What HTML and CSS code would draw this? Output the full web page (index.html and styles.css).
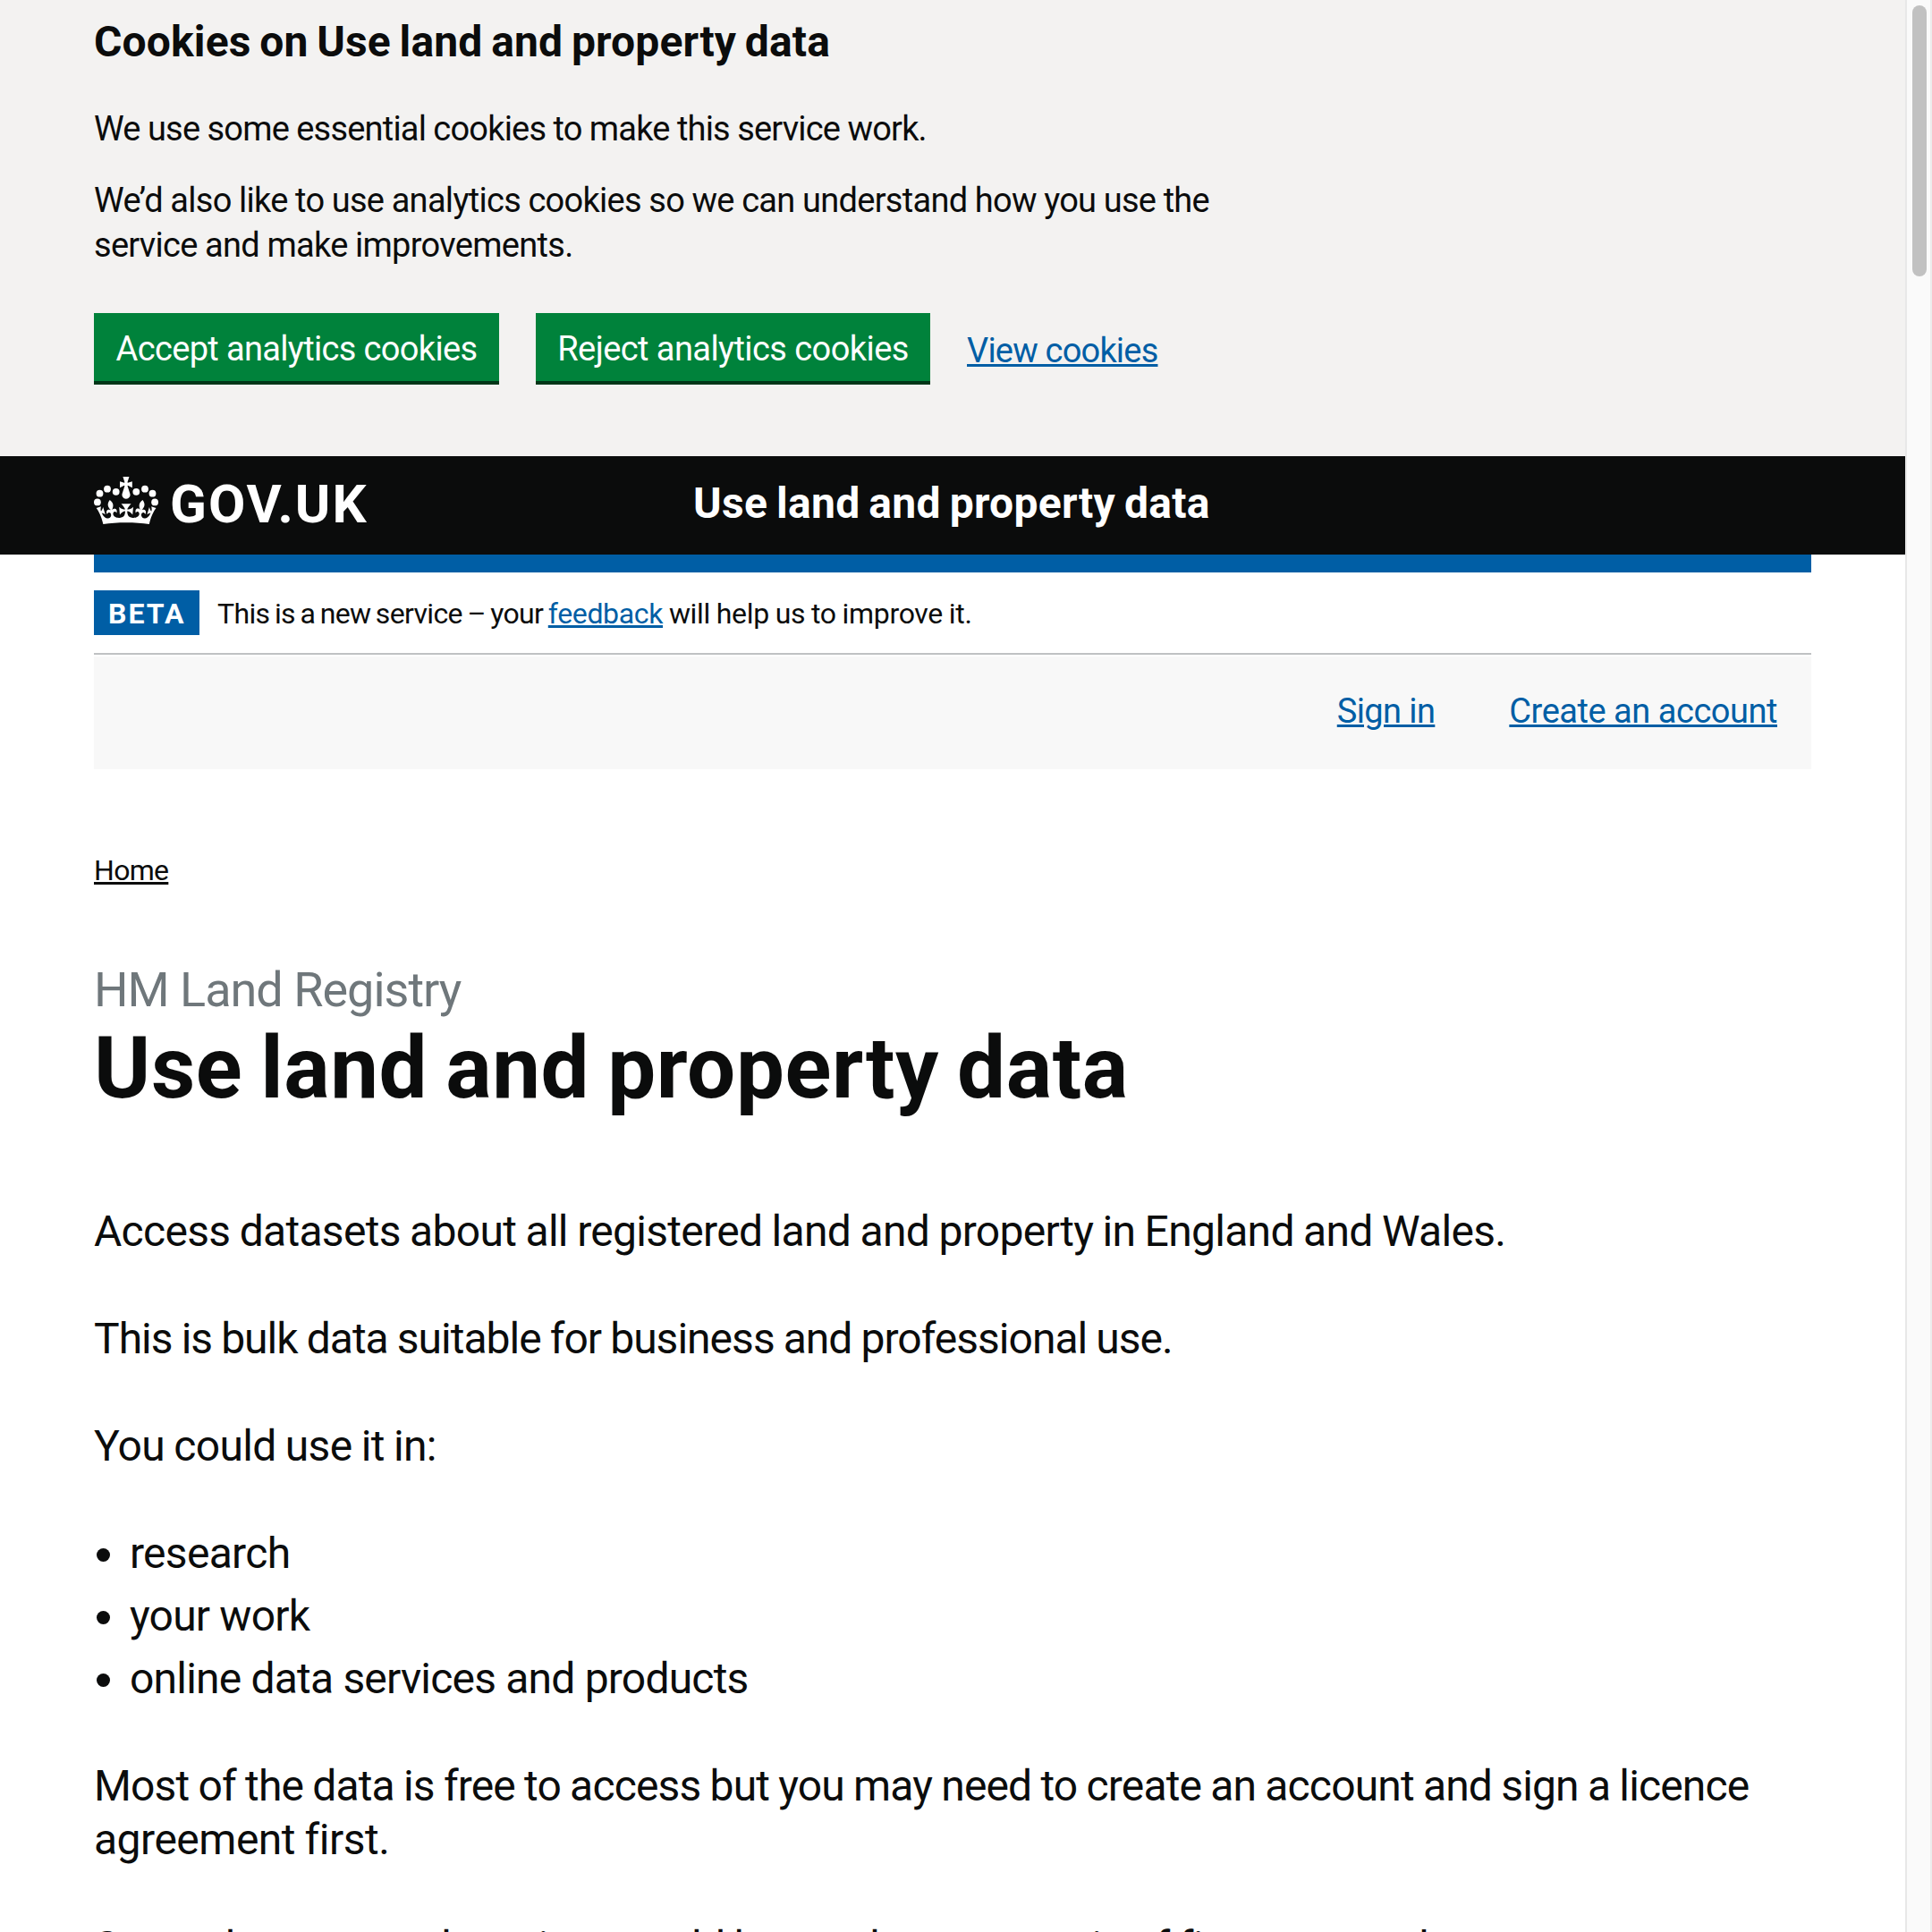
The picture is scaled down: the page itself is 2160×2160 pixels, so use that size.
FILE: index.html
```
<!DOCTYPE html>
<html lang="en">
<head>
<meta charset="utf-8">
<title>Use land and property data - GOV.UK</title>
<link rel="stylesheet" href="styles.css">
</head>
<body>
<div class="viewport">
  <div class="page">
    <section class="cookie-banner">
      <h2 class="cookie-title">Cookies on Use land and property data</h2>
      <p class="cookie-text t-essential">We use some essential cookies to make this service work.</p>
      <p class="cookie-text">We’d also like to use analytics cookies so we can understand how you use the<br>service and make improvements.</p>
      <div class="button-group">
        <button class="button accept">Accept analytics cookies</button>
        <button class="button reject">Reject analytics cookies</button>
        <a class="link view-cookies" href="#">View cookies</a>
      </div>
    </section>

    <header class="header">
      <a class="logo" href="#">
        <svg class="crown" width="72" height="54" viewBox="0 0 72 54" fill="#fff" aria-hidden="true">
          <circle cx="15" cy="13.7" r="3.9"/><circle cx="6.5" cy="18.7" r="3.9"/><circle cx="3.9" cy="28.4" r="3.9"/><circle cx="24.7" cy="16.8" r="3.9"/>
          <circle cx="57" cy="13.7" r="3.9"/><circle cx="65.5" cy="18.7" r="3.9"/><circle cx="68.1" cy="28.4" r="3.9"/><circle cx="47.3" cy="16.8" r="3.9"/>
          <path transform="translate(2.7 0) scale(1.05 1.05)" d="M33.1,9.8c.2-.1.3-.3.5-.5l4.6,2.4v-6.8l-4.6,1.5c-.1-.2-.3-.3-.5-.5l1.9-5.9h-6.7l1.9,5.9c-.2.1-.3.3-.5.5l-4.6-1.5v6.8l4.6-2.4c.1.2.3.3.5.5l-2.6,8c-.9,2.8,1.2,5.7,4.1,5.7h0c3,0,5.1-2.9,4.1-5.7l-2.6-8Z"/>
          <path transform="translate(2.7 -8.6) scale(1.05 1.027)" d="M37,37.9s-3.4,3.8-4.1,6.1c2.2,0,4.2-.5,6.4-2.8l-.7,8.5c-2-2.8-4.4-4.1-5.7-3.8.1,3.1.5,6.7,5.8,7.2,3.7.3,6.7-1.5,7-3.8.4-2.6-2-4.3-3.7-1.6-1.4-4.5,2.4-6.1,4.9-3.2-1.9-4.5-1.8-7.7,2.4-10.9,3,4,2.6,7.3-1.2,11.1,2.4-1.3,6.2,0,4,4.6-1.2-2.8-3.7-2.2-4.2.2-.3,1.7.7,3.7,3,4.2,1.9.3,4.7-.9,7-5.9-1.3,0-2.4.7-3.9,1.7l2.4-8c.6,2.3,1.4,3.7,2.2,4.5.6-1.6.5-2.8,0-5.3l5,1.8c-2.6,3.6-5.2,8.7-7.3,17.5-7.4-1.1-15.7-1.7-24.5-1.7h0c-8.8,0-17.1.6-24.5,1.7-2.1-8.9-4.7-13.9-7.3-17.5l5-1.8c-.5,2.5-.6,3.7,0,5.3.8-.8,1.6-2.3,2.2-4.5l2.4,8c-1.5-1-2.6-1.7-3.9-1.7,2.3,5,5.2,6.2,7,5.9,2.3-.4,3.3-2.4,3-4.2-.5-2.4-3-3.1-4.2-.2-2.2-4.6,1.6-6,4-4.6-3.7-3.7-4.2-7.1-1.2-11.1,4.2,3.2,4.3,6.4,2.4,10.9,2.5-2.8,6.3-1.3,4.9,3.2-1.8-2.7-4.1-1-3.7,1.6.3,2.3,3.3,4.1,7,3.8,5.4-.5,5.7-4.2,5.8-7.2-1.3-.2-3.7,1-5.7,3.8l-.7-8.5c2.2,2.3,4.2,2.7,6.4,2.8-.7-2.3-4.1-6.1-4.1-6.1h10.6Z"/>
        </svg>
        <span class="wordmark">GOV.UK</span>
      </a>
      <span class="service-name">Use land and property data</span>
    </header>

    <div class="container">
      <div class="blue-bar"></div>
      <div class="phase-banner">
        <strong class="tag">BETA</strong>
        <span class="phase-text"><span class="phase-intro">This is a new service – your </span><a class="link feedback" href="#">feedback</a><span class="phase-end"> will help us to improve it.</span></span>
      </div>
      <nav class="account-nav">
        <a class="link sign-in" href="#">Sign in</a>
        <a class="link create" href="#">Create an account</a>
      </nav>
      <div class="breadcrumbs"><a class="crumb" href="#">Home</a></div>
      <main class="content">
        <span class="caption">HM Land Registry</span>
        <h1 class="title">Use land and property data</h1>
        <p class="lead">Access datasets about all registered land and property in England and Wales.</p>
        <p class="lead t-bulk">This is bulk data suitable for business and professional use.</p>
        <p class="lead t-you">You could use it in:</p>
        <ul class="uses">
          <li class="use t-research">research</li>
          <li class="use">your work</li>
          <li class="use">online data services and products</li>
        </ul>
        <p class="lead"><span class="t-most">Most of the data is free to access but you may need to create an account and sign a licence</span><br><span class="t-agree">agreement first.</span></p>
        <p class="lead">Some datasets and services could be used across a mix of firms to see those</p>
      </main>
    </div>
  </div>
  <div class="scrollbar"><div class="thumb"></div></div>
</div>
</body>
</html>
```
FILE: styles.css
```
* { box-sizing: border-box; }

body {
  margin: 0;
  background: #fff;
  color: #0b0c0c;
  font-family: Roboto, "Noto Sans", sans-serif;
}

h1, h2, p, ul { margin: 0; padding: 0; }

.viewport {
  display: flex;
  width: 2160px;
  height: 2160px;
  overflow: hidden;
}

.page {
  width: 2130px;
  height: 2160px;
  overflow: hidden;
  white-space: nowrap;
}

.link {
  color: #005ea5;
  text-decoration: underline;
  text-decoration-thickness: 3px;
  text-underline-offset: 2px;
}

/* Cookie banner */
.cookie-banner {
  height: 510px;
  padding: 17px 105px 0;
  background: #f3f2f1;
}
.cookie-title {
  margin-bottom: 42px;
  font-size: 48px;
  line-height: 60px;
  letter-spacing: 0.15px;
  word-spacing: -2.4px;
}
.cookie-text {
  margin-bottom: 30px;
  font-size: 38px;
  line-height: 50px;
  letter-spacing: -0.7px;
  word-spacing: -0.4px;
}
.t-essential { letter-spacing: -0.8px; }
.button-group {
  display: flex;
  gap: 41px;
  padding-top: 21px;
}
.button {
  height: 80px;
  padding: 15px 0 11px;
  border: 0;
  border-bottom: 4px solid #003618;
  background: #00823b;
  color: #fff;
  font-family: inherit;
  font-size: 38px;
  line-height: 50px;
  text-align: center;
}
.accept { width: 453px; letter-spacing: -0.65px; }
.reject { width: 441px; letter-spacing: -0.57px; }
.view-cookies {
  padding-top: 17px;
  font-size: 38px;
  line-height: 50px;
  letter-spacing: -0.8px;
}

/* Header */
.header {
  display: flex;
  height: 110px;
  padding-left: 105px;
  background: #0b0c0c;
  color: #fff;
  font-weight: 700;
}
.logo {
  display: flex;
  width: 670px;
  color: #fff;
  text-decoration: none;
}
.crown { margin-top: 23px; }
.wordmark {
  margin-left: 13px;
  font-size: 60px;
  line-height: 108px;
  letter-spacing: 2px;
}
.service-name {
  font-size: 48px;
  line-height: 105px;
  letter-spacing: 0.3px;
  word-spacing: -2.4px;
}

/* Service bars */
.container { width: 1920px; margin-left: 105px; }
.blue-bar { height: 20px; background: #005ea5; }
.phase-banner {
  display: flex;
  gap: 20px;
  height: 92px;
  padding-top: 20px;
  border-bottom: 2px solid #bfc1c3;
  font-size: 32px;
  line-height: 52px;
}
.tag {
  width: 118px;
  height: 50px;
  padding-left: 16px;
  background: #005ea5;
  color: #fff;
  letter-spacing: 2px;
}
.phase-text { white-space: pre; }
.phase-intro { letter-spacing: -0.65px; word-spacing: -1.8px; }
.feedback { letter-spacing: -0.35px; }
.phase-end { letter-spacing: -0.32px; word-spacing: -0.8px; }
.account-nav {
  display: flex;
  justify-content: flex-end;
  gap: 83px;
  height: 126px;
  margin-top: 2px;
  padding-right: 38px;
  background: #f8f8f8;
  font-size: 38px;
  line-height: 123px;
}
.sign-in { letter-spacing: -0.6px; }
.create { letter-spacing: -0.47px; }
.breadcrumbs {
  margin-top: 93px;
  font-size: 32px;
  line-height: 40px;
  letter-spacing: -0.7px;
}
.crumb {
  color: #0b0c0c;
  text-decoration: underline;
  text-decoration-thickness: 3px;
  text-underline-offset: 2px;
}

/* Content */
.content { padding-top: 84px; }
.caption {
  display: block;
  color: #6f777b;
  font-size: 54px;
  line-height: 60px;
  letter-spacing: -1px;
}
.title {
  margin: 7px 0 103px;
  font-size: 96px;
  line-height: 100px;
  letter-spacing: 0.6px;
  word-spacing: -4.5px;
}
.lead {
  margin-bottom: 60px;
  font-size: 48px;
  line-height: 60px;
  letter-spacing: -0.7px;
  word-spacing: -0.9px;
}
.t-bulk { letter-spacing: -0.98px; }
.t-you { letter-spacing: -0.7px; }
.t-most { letter-spacing: -0.85px; }
.t-agree { letter-spacing: -0.5px; }
.uses { margin-bottom: 60px; list-style: none; }
.use {
  display: flex;
  align-items: center;
  gap: 22px;
  margin-bottom: 10px;
  padding-left: 3px;
  font-size: 48px;
  line-height: 60px;
  letter-spacing: -0.8px;
}
.use:last-child { margin-bottom: 0; }
.use::before {
  content: "";
  width: 15px;
  height: 15px;
  margin-top: 3px;
  border-radius: 50%;
  background: #0b0c0c;
}
.t-research { letter-spacing: -0.7px; }

/* Scrollbar */
.scrollbar {
  width: 30px;
  height: 2160px;
  padding: 6px 0 0 6px;
  border-right: 2px solid #ececec;
  border-left: 2px solid #e8e8e8;
  background: #fafafa;
}
.thumb {
  width: 16px;
  height: 303px;
  border-radius: 8px;
  background: #c1c1c1;
}
```
